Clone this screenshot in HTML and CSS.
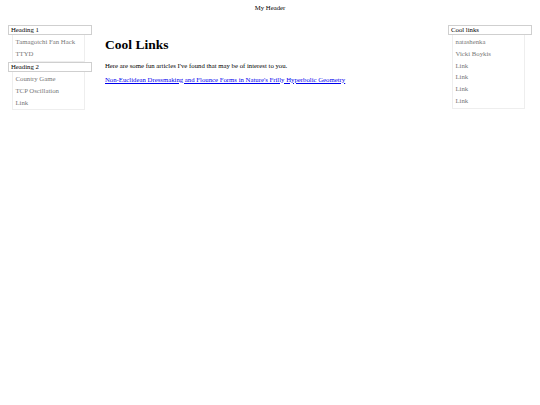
FILE: index.html
```html
<!DOCTYPE html>
<html>
<head>
<meta charset="utf-8">
<link rel="stylesheet" href="styles.css">
</head>
<body>
<header class="site-header">My Header</header>
<div class="layout">
  <aside class="sidebar">
    <div class="nav-heading">Heading 1</div>
    <ul class="nav-list">
      <li>Tamagotchi Fan Hack</li>
      <li>TTYD</li>
    </ul>
    <div class="nav-heading">Heading 2</div>
    <ul class="nav-list">
      <li>Country Game</li>
      <li>TCP Oscillation</li>
      <li>Link</li>
    </ul>
  </aside>
  <main class="content">
    <h1 class="title">Cool Links</h1>
    <p class="intro">Here are some fun articles I've found that may be of interest to you.</p>
    <p class="links"><a href="#">Non-Euclidean Dressmaking and Flounce Forms in Nature's Frilly Hyperbolic Geometry</a></p>
  </main>
  <aside class="sidebar">
    <div class="nav-heading">Cool links</div>
    <ul class="nav-list">
      <li>natashenka</li>
      <li>Vicki Boykis</li>
      <li>Link</li>
      <li>Link</li>
      <li>Link</li>
      <li>Link</li>
    </ul>
  </aside>
</div>
</body>
</html>
```
FILE: styles.css
```css
html, body {
  margin: 0;
  padding: 0;
  background: #fff;
}
body {
  font-family: "Liberation Serif", "Times New Roman", serif;
  font-size: 6.75px;
  color: #000;
}
.site-header {
  text-align: center;
  line-height: 8px;
  padding-top: 3.5px;
  height: 24.5px;
  box-sizing: border-box;
}
.layout {
  display: grid;
  grid-template-columns: 84px 1fr 84px;
  column-gap: 13px;
  padding: 0 8px;
}
.sidebar {
  display: flex;
  flex-direction: column;
}
.nav-heading {
  border: 1px solid #cfcfcf;
  line-height: 8.5px;
  padding: 0 2px;
}
.nav-list {
  list-style: none;
  margin: 0 7.5px 0 4px;
  padding: 1px 0;
  border: 1px solid #eeeeee;
  border-top: none;
}
.nav-list li {
  line-height: 11.8px;
  padding-left: 2.5px;
  color: #777;
}
.content {
  padding-top: 12px;
}
.title {
  font-size: 13.5px;
  line-height: 15px;
  margin: 0 0 10px 0;
  font-weight: bold;
}
.intro {
  margin: 0 0 6px 0;
  line-height: 8px;
}
.links {
  margin: 0;
  line-height: 8px;
}
.links a {
  color: #0000ee;
}
```
